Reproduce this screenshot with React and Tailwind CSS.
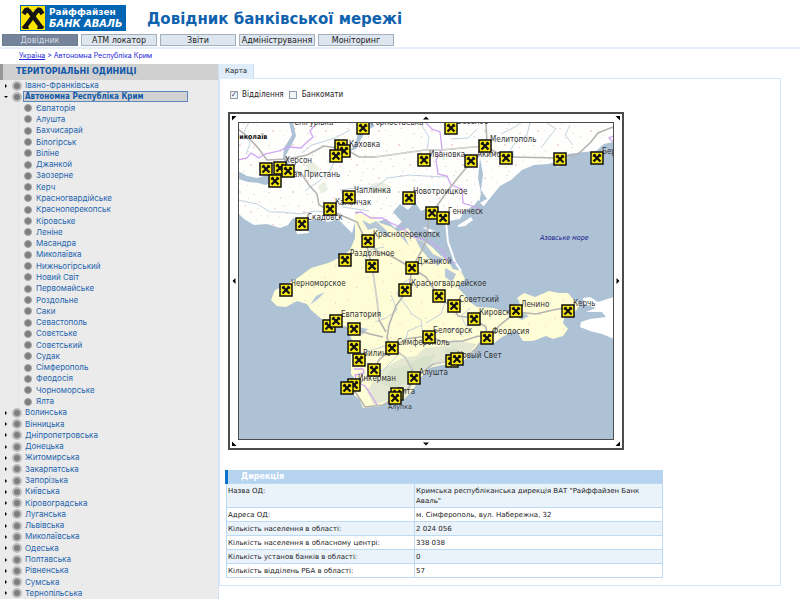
const tabs = ['Довідник', 'АТМ локатор', 'Звіти', 'Адміністрування', 'Моніторинг'];
const cities = ['Євпаторія', 'Алушта', 'Бахчисарай', 'Білогірськ', 'Віліне', 'Джанкой', 'Заозерне', 'Керч', 'Красногвардійське', 'Красноперекопськ', 'Кіровське', 'Леніне', 'Масандра', 'Миколаївка', 'Нижньогірський', 'Новий Світ', 'Первомайське', 'Роздольне', 'Саки', 'Севастополь', 'Совєтське', 'Совєтський', 'Судак', 'Сімферополь', 'Феодосія', 'Чорноморське', 'Ялта'];
const regions = ['Волинська', 'Вінницька', 'Дніпропетровська', 'Донецька', 'Житомирська', 'Закарпатська', 'Запорізька', 'Київська', 'Кіровоградська', 'Луганська', 'Львівська', 'Миколаївська', 'Одеська', 'Полтавська', 'Рівненська', 'Сумська', 'Тернопільська'];
const rows = [
  ['Назва ОД:', 'Кримська республіканська дирекція ВАТ "Райффайзен Банк Аваль"'],
  ['Адреса ОД:', 'м. Сімферополь, вул. Набережна, 32'],
  ['Кількість населення в області:', '2 024 056'],
  ['Кількість населення в обласному центрі:', '338 038'],
  ['Кількість установ банків в області:', '0'],
  ['Кількість відділень РБА в області:', '57'],
];

// Map coordinates share one plane, from (239,123) to (613,439).
const labels = [
  [294, 125, 'Снігурівка'], [371, 125, 'Горностаевка'], [457, 124, 'Веселое'],
  [349, 147, 'Каховка'], [285, 163, 'Херсон'], [293, 177, 'ая Пристань'],
  [354, 193, 'Чаплинка'], [335, 205, 'Каланчак'], [307, 220, 'Скадовск'],
  [413, 194, 'Новотроицкое'], [448, 214, 'Геническ'], [490, 142, 'Мелитополь'],
  [429, 157, 'Ивановка'], [477, 157, 'Акимовка'], [602, 154, 'Бердянск'],
  [373, 237, 'Красноперекопск'], [350, 256, 'Раздольное'], [417, 264, 'Джанкой'],
  [291, 286, 'Черноморское'], [411, 286, 'Красногвардейское'], [459, 302, 'Советский'],
  [479, 315, 'Кировск'], [521, 307, 'Ленино'], [573, 306, 'Керчь'],
  [341, 317, 'Евпатория'], [433, 333, 'Белогорск'], [492, 334, 'Феодосия'],
  [397, 345, 'Симферополь'], [363, 356, 'Вилино'], [457, 358, 'Новый Свет'],
  [358, 381, 'Инкерман'], [419, 375, 'Алушта'], [397, 394, 'Ялта'],
];
const pins = [
  [363, 128], [451, 128], [341, 146], [344, 151], [336, 156], [485, 146], [424, 160], [471, 161], [506, 158], [560, 159], [597, 158],
  [266, 169], [280, 168], [288, 171], [275, 181], [349, 197], [330, 209], [302, 224], [409, 198], [432, 213], [443, 218],
  [368, 241], [345, 260], [372, 266], [412, 268], [286, 290], [405, 290], [439, 296], [454, 306], [474, 319], [516, 311], [568, 311],
  [329, 326], [336, 321], [354, 329], [354, 347], [359, 360], [392, 348], [429, 337], [487, 338], [374, 370], [452, 361], [457, 359],
  [414, 378], [354, 385], [347, 388], [397, 394], [395, 398],
];

const mainland = 'M238 122H613V142L604 144 596 151 584 152 568 154 561 161 548 164 534 165 522 170 511 180 500 186 491 197 484 206 474 205 464 212 460 219 449 221 441 229 430 232 421 226 414 232 404 220 395 228 386 219 374 223 366 216 355 222 352 233 345 226 338 219 328 222 317 219 306 222 293 218 288 225 280 228 267 224 254 225 244 219 238 213Z';
const crimea = 'M355 212 364 215 373 216 380 223 392 227 398 232 408 228 414 237 425 242 432 247 440 255 448 261 453 269 461 271 465 279 458 288 464 294 470 302 477 307 493 308 507 312 520 303 517 298 524 293 535 297 549 291 559 293 568 293 573 299 580 304 576 311 565 315 563 323 568 329 563 336 553 339 546 336 533 341 523 341 516 330 502 337 494 343 480 342 477 347 469 353 467 358 456 365 442 365 429 368 419 380 412 391 403 400 390 401 382 406 363 408 359 399 350 392 341 390 344 384 355 379 351 374 351 355 352 340 346 326 336 327 325 322 311 310 307 304 297 301 286 307 277 306 271 300 275 290 286 285 299 277 311 268 328 263 341 257 350 250 355 238Z';

function Cross({ className }) {
  return (
    <svg viewBox="0 0 24 24" className={className} aria-hidden="true">
      <rect width="24" height="24" fill="#fce500" />
      <g fill="none" stroke="#151515" strokeWidth="4.500" strokeLinejoin="round">
        <path d="M2.500 8 5 4 8 5 20 21" />
        <path d="M21.500 8 19 4 16 5 4 21" />
      </g>
      <path d="M.5 21 6 17 8 23H2.500ZM23.500 21 18 17 16 23H21.500ZM4 3 7 1 10 6ZM20 3 17 1 14 6Z" fill="#151515" />
    </svg>
  );
}

function RegionMap() {
  return (
    <svg viewBox="239 123 374 316" className="block w-full" role="img" aria-label="Карта">
      <defs>
        <pattern id="specks" width="53" height="47" patternUnits="userSpaceOnUse">
          <path d="M3 4h2v1h-2zM15 9h1v2h-1zM27 3h2v2h-2zM9 20h2v1h-2zM33 17h1v2h-1zM21 25h2v1h-2zM5 13h1v1h-1zM24 15h1v1h-1zM14 28h1v1h-1zM41 6h2v1h-2zM47 13h1v2h-1zM38 23h2v2h-2zM49 27h1v1h-1zM7 36h2v2h-2zM19 41h1v1h-1zM29 34h2v1h-2zM42 39h2v1h-2zM35 44h1v1h-1zM50 42h1v2h-1zM12 15h1v1h-1zM44 31h1v1h-1zM2 27h1v2h-1zM36 10h1v1h-1z" fill="#f3d9d8" />
          <path d="M18 18l2-1 1 2h-2zM31 29l2 1v1h-2zM45 20h2v1h-2zM14 36h2v1h-2z" fill="#ecebe6" />
        </pattern>
        <pattern id="fields" width="43" height="37" patternUnits="userSpaceOnUse">
          <path d="M3 4h2v1h-2zM17 9h1v1h-1zM23 18h2v1h-2zM9 16h1v1h-1zM34 6h1v2h-1zM38 22h2v1h-2zM28 30h1v1h-1zM12 28h2v1h-2zM4 33h1v1h-1zM30 14h1v1h-1z" fill="#f1dfcb" />
        </pattern>
        <g id="pin">
          <rect x="-6" y="-6" width="12" height="12" fill="#f7e614" stroke="#111" strokeWidth="1.500" />
          <path d="M-3.500-3.500 3.500 3.500M3.500-3.500-3.500 3.500" stroke="#111" strokeWidth="2.300" />
          <path d="M-4.500-2-2-4.500-1-3-3.500-1ZM4.500-2 2-4.500 1-3 3.500-1Z" fill="#111" />
        </g>
      </defs>
      <rect x="238" y="122" width="376" height="318" fill="#aec2d6" />
      <path d={mainland} fill="#fefefd" />
      <path d={mainland} fill="url(#specks)" />
      <path d="M238 171 247 176 257 178 267 175 274 181 266 185 258 183 248 182 238 179ZM290 171 288 163 286 155 292 144 296 136 293 122 289 122 292 135 284 148 283 158 287 168ZM358 128 357 138 354 145 350 151 356 149 361 139 366 131 375 126 371 122 362 122ZM480 158 483 174 481 190 487 199 479 203 481 193 478 178ZM393 212 400 204 408 210 415 202 421 211 430 207 429 214 437 222 448 223 438 232 424 227 410 233 402 222ZM462 220 470 212 478 200 483 206 473 216Z" fill="#aec2d6" />
      <path d={crimea} fill="#fffdd6" />
      <path d={crimea} fill="url(#fields)" />
      <path d="M367 392 375 378 386 367 402 358 416 356 425 348 443 346 454 340 470 343 477 344 467 355 444 363 429 367 415 381 405 397 388 400 374 405Z" fill="#e4e8d2" />
      <path d="M380 383 392 369 408 365 421 357 436 354 429 365 410 377 395 390ZM443 349 456 348 464 354 449 359Z" fill="#d8e1ca" />
      <path d="M362 220 370 224 376 221 385 229 391 237 382 234 376 228 368 230ZM415 238 424 242 433 254 444 259 438 266 428 258 420 248ZM397 232 405 237 409 246 403 239ZM445 268 456 274 452 282 445 277ZM310 305 318 299 325 292 316 296ZM362 335 368 329 358 327ZM518 318 524 313 529 316 522 320Z" fill="#b6c8d8" />
      <path d="M306 164 313 162 320 169 312 175 306 171ZM370 184 382 182 392 187 386 194 372 191ZM570 156 563 163 556 169 561 160ZM318 186 325 181 328 190 321 194Z" fill="#eaefe2" />
      <path d="M583 298 590 297 598 302 614 297V339L602 334 590 331 580 327 581 322 590 319 606 317 602 312 586 312 596 308 584 304ZM457 226 471 217 473 220 465 226 459 227ZM296 231 308 230 309 233 297 234Z" fill="#fff" />
      <path d="M446 222 448 242 455 262 461 271" fill="none" stroke="#fff" strokeWidth="2" />
      <g fill="none" stroke="#c2d2df">
        <path d="M238 200 257 204 270 212 282 212 300 214 316 211 331 213M305 191 319 181 330 171 336 158M302 153 312 145 335 138 350 130M340 190 356 188 376 187 388 178 410 175 425 176 447 177M342 190 343 207 369 211M422 126 429 137 427 149M530 122 527 135 514 144 506 158M547 123 556 129 549 137 541 148M501 134 513 128 521 123M570 125 565 135 573 145M451 139 468 138 477 129M249 122 244 132 250 143 246 155" />
        <path d="M411 278 400 285 397 294 405 304 412 314 421 320 423 335M433 292 446 299 441 314 426 323M391 295 397 310 386 318 375 322M470 308 461 316 466 326 478 325M385 346 369 351 357 354M398 355 384 369 370 377M422 325 408 331 405 342M463 337 458 330 447 329M365 260 370 250 384 247" />
      </g>
      <path fill="none" stroke="#cfa6f2" strokeWidth="1.300" d="M314 126 310 131 313 137 306 143 301 148 288 147 279 151 265 154 259 158 251 153 247 158 238 160M425 122 432 129 440 132 442 149 436 160 438 174 447 176 451 185 462 189 463 203 475 207 481 210M355 213 361 212 371 218 382 218 391 223 400 227 406 231 413 237 422 239 432 243 443 251 447 260 456 263M354 369 363 369 364 373 355 375 357 382 365 386 369 392 373 398 377 405M613 136 609 138 613 142" />
      <g fill="none" stroke="#b4b4b2" strokeWidth="1.600">
        <path d="M238 129 249 138 259 149 267 160 288 159 307 155 324 146 337 148 349 151 359 157 375 157 397 154 425 150 441 150 485 146 505 157 560 158 578 154 590 143 598 133 613 127M486 122 487 145 479 156 471 162 461 174 449 189 434 210 429 220 426 241 421 252 412 268 409 288 396 306 389 325 387 338 392 348M280 168 301 173 309 185 317 194 319 205 331 211 345 217 357 222 365 239 372 266 377 300 379 320 386 332M368 241 377 251 391 256 412 268 426 277 439 297 454 309 458 316 474 318M328 326 354 329 370 334 383 337M392 348 379 360 374 370 360 383 347 387M392 348 405 357 412 369 414 379 408 389 396 397 383 405 365 407 356 393 349 388M392 348 406 339 420 337 431 337 443 342 463 341 478 336 487 338M487 338 500 325 516 312 536 314 553 310 569 307M474 319 486 327 487 338 479 344 474 352 458 359 445 362 433 364 421 373 414 379" />
      </g>
      <path fill="none" stroke="#f3f3f0" strokeWidth=".6" d="M375 157 397 154 425 150 441 150 485 146M392 348 405 357 412 369M474 352 458 359 445 362 433 364M372 266 377 300 379 320" />
      <g className="font-['DejaVu_Sans_Condensed'] text-[8px]" fill="#333">
        {labels.map(([x, y, name]) => <text key={name} x={x} y={y}>{name}</text>)}
        <text x="388" y="409" className="text-[7px]">Алупка</text>
        <text x="233" y="139" className="text-[7px] font-bold" fill="#111">Миколаїв</text>
      </g>
      <text x="540" y="240" className="font-['DejaVu_Sans_Condensed'] text-[7px] italic" fill="#14148c">Азовське море</text>
      {pins.map(([x, y], i) => <use key={i} href="#pin" x={x} y={y} />)}
    </svg>
  );
}

function Arrow({ d, label }) {
  return (
    <button aria-label={label} className="grid place-items-center">
      <svg viewBox="0 0 6 6" className="size-[6px]" aria-hidden="true"><path d={d} fill="#000" /></svg>
    </button>
  );
}

function Region({ name, open }) {
  return (
    <li className="flex items-center pl-[3px]">
      <svg viewBox="0 0 6 6" className="size-[6px] shrink-0" aria-hidden="true"><path d={open ? 'M1 2h4l-2 2z' : 'M2 1l2 2-2 2z'} fill="#000" /></svg>
      <span className="ml-[3px] mr-px size-[10px] shrink-0 rounded-full border-2 border-[#bababa] bg-[#7e7e7e]" />
      <a href="#" className={open ? "h-[11px] w-[165px] border border-[#5b87bd] bg-[#d2d2d2] pl-px font-['DejaVu_Sans_Condensed'] font-bold leading-[10px] text-[#1058a7]" : 'pl-[2px]'}>{name}</a>
    </li>
  );
}

export default function App() {
  return (
    <div className="flex h-screen flex-col overflow-hidden bg-white font-['DejaVu_Sans',sans-serif] text-[8px] text-[#222]">
      <header className="shrink-0">
        <div className="flex h-[34px] items-start pl-[20px] pt-[5px]">
          <div className="flex h-[26px] w-[106px] bg-[#0066b3] text-white">
            <Cross className="m-px size-[24px] shrink-0" />
            <div className="whitespace-nowrap pl-[3px] pt-px font-bold">
              <div className="text-[9px] leading-[12px]">Райффайзен</div>
              <div className="font-['DejaVu_Sans_Condensed'] text-[11px] italic leading-[12px]">БАНК АВАЛЬ</div>
            </div>
          </div>
          <h1 className="ml-[21px] pt-[4px] text-[15px] font-bold leading-[20px] text-[#0f62ad]">Довідник банківської мережі</h1>
        </div>
        <nav className="flex h-[15px] gap-[3px] border-b-2 border-[#e6f0fa] pl-[2px]">
          {tabs.map((t, i) => (
            <button key={t} className={`h-[12px] w-[76px] whitespace-nowrap border leading-[11px] ${i === 0 ? 'border-[#6c7c93] bg-[#75849a] text-[#d5dce6]' : 'border-[#a3afbd] bg-[#dde5ee]'}`}>{t}</button>
          ))}
        </nav>
      </header>
      <div className="h-[15px] shrink-0 pl-[19px] font-['Inter'] text-[7px] leading-[13px] text-[#2525d8]">
        <a href="#" className="underline">Україна</a> &gt; Автономна Республіка Крим
      </div>
      <div className="flex min-h-0 flex-1">
        <aside className="flex w-[219px] shrink-0 flex-col border-r border-[#d3e3f5] bg-[#ebebeb] text-[#2565ad]">
          <h2 className="h-[16px] shrink-0 border-l-[3px] border-[#979797] bg-[#d0d0d0] pl-[13px] font-bold leading-[16px] text-[#1058a7]">ТЕРИТОРІАЛЬНІ ОДИНИЦІ</h2>
          <ul className="grid flex-1 auto-rows-fr font-['Inter'] leading-[11px]">
            <Region name="Івано-Франківська" />
            <Region name="Автономна Республіка Крим" open />
            {cities.map((c) => (
              <li key={c} className="ml-[18px] flex items-center border-l border-dotted border-[#d3e0ef] pl-[5px]">
                <span className="mr-[4px] size-[8px] shrink-0 rounded-full border border-[#a5a5a5] bg-[#7e7e7e]" />
                <a href="#">{c}</a>
              </li>
            ))}
            {regions.map((r) => <Region key={r} name={r} />)}
          </ul>
        </aside>
        <main className="min-w-0 flex-1 pr-[19px]">
          <div className="h-[14px]"><button className="h-[15px] w-[35px] border-r border-[#c9dff5] bg-[#dfecfa] text-[7px] leading-[15px]">Карта</button></div>
          <section className="border border-[#d3e5f7] pb-[7px] pl-[5px]">
            <div className="flex h-[33px] items-center gap-[4px] pb-[2px] pl-[5px] font-['DejaVu_Sans_Condensed']">
              <input id="branches" type="checkbox" defaultChecked className="grid size-[8px] appearance-none place-items-center border border-[#8e9aa6] bg-[#f1f3f5] text-[8px] font-bold leading-[6px] text-[#2c4280] checked:before:content-['✓']" /><label htmlFor="branches" className="pr-px">Відділення</label>
              <input id="atms" type="checkbox" className="size-[8px] appearance-none border border-[#8e9aa6] bg-[#f1f3f5]" /><label htmlFor="atms" className="pl-px">Банкомати</label>
            </div>
            <div className="ml-[3px] grid w-[396px] grid-cols-[8px_1fr_8px] grid-rows-[8px_auto_8px] border-2 border-[#4c4c4c]">
              <Arrow d="M1 1h4.500l-4.500 4.500z" label="Північний захід" />
              <Arrow d="M0 4.500h6l-3-3z" label="Північ" />
              <Arrow d="M.5 1h4.500v4.500z" label="Північний схід" />
              <Arrow d="M4.500 0v6l-3-3z" label="Захід" />
              <div className="border border-[#4c4c4c]"><RegionMap /></div>
              <Arrow d="M1.500 0v6l3-3z" label="Схід" />
              <Arrow d="M1 .5v4.500h4.500z" label="Південний захід" />
              <Arrow d="M0 1.500h6l-3 3z" label="Південь" />
              <Arrow d="M5 .5v4.500h-4.500z" label="Південний схід" />
            </div>
            <table className="mt-[20px] w-[438px] border-collapse text-[7px] leading-[10px]">
              <thead>
                <tr><th colSpan={2} className="h-[13px] border-l-[3px] border-[#0a74cc] bg-[#b6d3ef] p-0 pl-[13px] pt-px text-left text-[8px] text-white">Дирекція</th></tr>
              </thead>
              <tbody>
                {rows.map(([k, v]) => (
                  <tr key={k} className="odd:bg-[#eaf2fa]">
                    <th scope="row" className="w-[188px] border border-[#bcdaf3] px-px pb-px pt-[2px] text-left align-top font-normal">{k}</th>
                    <td className="border border-[#bcdaf3] px-px pb-px pr-[16px] pt-[2px] align-top">{v}</td>
                  </tr>
                ))}
              </tbody>
            </table>
          </section>
        </main>
      </div>
    </div>
  );
}
